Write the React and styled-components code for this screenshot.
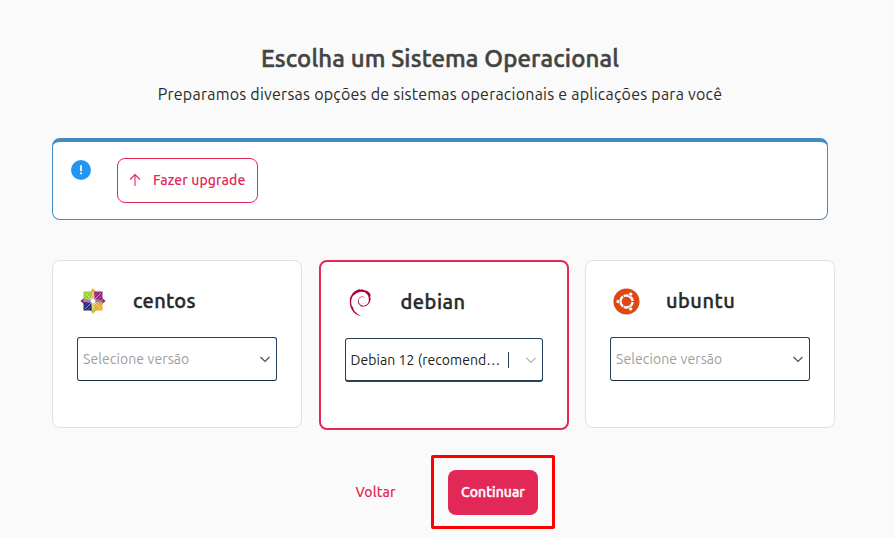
import React from "react";
import styled, { createGlobalStyle } from "styled-components";
import { SiDebian } from "react-icons/si";
import { FaUbuntu } from "react-icons/fa";

const Global = createGlobalStyle`
  * { box-sizing: border-box; }
  body { margin: 0; background: #fafafa; font-family: Ubuntu, "Noto Sans", sans-serif; }
  button { font-family: inherit; cursor: pointer; }
`;

const Page = styled.main`
  width: 895px;
  height: 538px;
  padding: 42px 0 0 52px;
  overflow: hidden;
`;
const Header = styled.header`
  width: 776px;
  text-align: center;
  height: 96px;
  white-space: nowrap;
`;
const Title = styled.h1`
  margin: 0;
  font-size: 24px;
  line-height: 34px;
  font-weight: 500;
  letter-spacing: 0.12px;
  -webkit-text-stroke: 0.5px #434343;
  color: #434343;
`;
const Subtitle = styled.p`
  margin: 6px 0 0;
  font-size: 16px;
  line-height: 24px;
  letter-spacing: 0.235px;
  color: #2b2b2b;
`;
const Notice = styled.section`
  display: flex;
  align-items: flex-start;
  width: 776px;
  height: 82px;
  padding: 16px 18px;
  border: 1px solid #428bc1;
  border-top-width: 4px;
  border-radius: 8px;
  background: #fff;
`;
const InfoDot = styled.svg`
  width: 20px;
  height: 20px;
  margin: 2px 26px 0 0;
`;
const UpgradeButton = styled.button`
  display: flex;
  align-items: center;
  gap: 12px;
  width: 141px;
  height: 45px;
  padding: 0 0 1px 11px;
  border: 1px solid #e22856;
  border-radius: 8px;
  background: #fff;
  color: #e22856;
  font-size: 14px;
  font-weight: 500;
  white-space: nowrap;
  letter-spacing: 0.1px;
`;
const Cards = styled.section`
  display: grid;
  grid-template-columns: repeat(3, 250px);
  column-gap: 16.5px;
  align-items: start;
  margin-top: 40px;
`;
const Card = styled.article`
  height: ${(p) => (p.$active ? 170 : 168)}px;
  padding: 24px;
  border: ${(p) => (p.$active ? "2px solid #e22856" : "1px solid #e0e0e0")};
  border-radius: 8px;
  background: #fff;
`;
const CardHead = styled.div`
  display: flex;
  align-items: center;
  height: 32px;
  margin-bottom: 20px;
`;
const Logo = styled.div`
  display: flex;
  align-items: center;
  justify-content: center;
  width: 32px;
  height: 32px;
  margin-right: 24px;
  svg { display: block; flex: none; }
`;
const Name = styled.h2`
  margin: 0;
  font-size: 20px;
  line-height: 30px;
  font-weight: 500;
  letter-spacing: ${(p) => p.$spacing};
  -webkit-text-stroke: 0.4px #292929;
  color: #292929;
`;
const Select = styled.div`
  display: flex;
  align-items: center;
  height: 44px;
  padding: 0 5px 0 5px;
  border: 1px solid #24405a;
  border-bottom: ${(p) => (p.$focus ? "2px solid #24405a" : "1px solid #1d2b3a")};
  border-radius: 3px;
  color: ${(p) => (p.$focus ? "#212121" : "#a0a0a0")};
  font-size: 14px;
  white-space: nowrap;
`;
const Value = styled.span`
  letter-spacing: ${(p) => p.$spacing};
`;
const Caret = styled.span`
  width: 1px;
  height: 16px;
  margin-left: 8px;
  background: #24405a;
`;
const Chevron = styled.svg`
  width: 12px;
  height: 12px;
  margin-left: auto;
  fill: none;
  stroke: ${(p) => (p.$muted ? "#b3b3b3" : "#505050")};
  stroke-width: 1.2;
`;
const Actions = styled.footer`
  display: flex;
  align-items: center;
  margin: 25px 0 0 303px;
`;
const BackButton = styled.button`
  width: 41px;
  padding: 0;
  border: 0;
  background: none;
  color: #e22856;
  font-size: 14px;
  font-weight: 500;
  letter-spacing: 0.1px;
  margin-right: 35px;
`;
const Highlight = styled.div`
  display: flex;
  align-items: center;
  justify-content: center;
  width: 124px;
  height: 74px;
  border: 3px solid #ff0000;
  border-radius: 2px;
`;
const ContinueButton = styled.button`
  width: 90px;
  height: 45px;
  padding: 0;
  border: 0;
  border-radius: 8px;
  background: #e22856;
  color: #fff;
  font-size: 14px;
  font-weight: 500;
  letter-spacing: 0.05px;
  -webkit-text-stroke: 0.4px #fff;
`;

function CentosLogo() {
  return (
    <svg width="26" height="26" viewBox="0 0 26 26">
      <path d="M13 .3 16 4h-6z" fill="#efa724" />
      <path d="m25.700 13-3.700 3v-6z" fill="#932279" />
      <path d="M13 25.700 10 22h6z" fill="#9ccd2a" />
      <path d="M.3 13 4 10v6z" fill="#932279" />
      <path d="M3.500 3.500H12V12H3.500z" fill="#9ccd2a" />
      <path d="M14 3.500h8.500V12H14z" fill="#932279" />
      <path d="M3.500 14H12v8.500H3.500z" fill="#262577" />
      <path d="M14 14h8.500v8.500H14z" fill="#efa724" />
      <path d="M11.700 3.500h2.600V12h-2.600z" fill="#efc276" />
      <path d="M14 11.700h8.500v2.600H14z" fill="#8681b4" />
      <path d="M11.700 14h2.600v8.500h-2.600z" fill="#bddf79" />
      <path d="M3.500 11.700H12v2.600H3.500z" fill="#b978aa" />
      <path d="m5 5 16 16M21 5 5 21" fill="none" stroke="#fff" strokeOpacity=".8" strokeWidth=".7" />
      <path d="m7 3.500 4.500 4.500v3.500H8L3.500 7M19 3.500 14.500 8v3.500H18L22.500 7M7 22.500l4.500-4.500v-3.500H8L3.500 19M19 22.500 14.500 18v-3.500H18l4.500 4.500" fill="none" stroke="#fff" strokeOpacity=".4" strokeWidth=".6" />
      <path d="m13 10 1.200 1.800L16 13l-1.800 1.200L13 16l-1.200-1.800L10 13l1.800-1.200z" fill="#fff" />
    </svg>
  );
}

function DownArrow({ muted }) {
  return (
    <Chevron viewBox="0 0 12 12" $muted={muted}>
      <path d="m1.500 4 4.500 4.500L10.500 4" />
    </Chevron>
  );
}

export default function App() {
  return (
    <>
      <Global />
      <Page>
        <Header>
          <Title>Escolha um Sistema Operacional</Title>
          <Subtitle>Preparamos diversas opções de sistemas operacionais e aplicações para você</Subtitle>
        </Header>
        <Notice>
          <InfoDot viewBox="0 0 20 20">
            <circle cx="10" cy="10" r="10" fill="#2196f3" />
            <path d="M10 5.200v6M10 12.500v1.800" stroke="#fff" strokeWidth="1.700" />
          </InfoDot>
          <UpgradeButton>
            <svg width="12" height="14" viewBox="0 0 12 14" fill="none" stroke="#e22856" strokeWidth="1.1">
              <path d="M6 13V1.500M1 6.500l5-5 5 5" />
            </svg>
            Fazer upgrade
          </UpgradeButton>
        </Notice>
        <Cards>
          <Card>
            <CardHead>
              <Logo><CentosLogo /></Logo>
              <Name $spacing="0.3px">centos</Name>
            </CardHead>
            <Select><Value $spacing="0.1px">Selecione versão</Value><DownArrow /></Select>
          </Card>
          <Card $active>
            <CardHead>
              <Logo><SiDebian size={27} color="#a80030" /></Logo>
              <Name $spacing="0.5px">debian</Name>
            </CardHead>
            <Select $focus><Value $spacing="0.06px">Debian 12 (recomend…</Value><Caret /><DownArrow muted /></Select>
          </Card>
          <Card>
            <CardHead>
              <Logo><FaUbuntu size={27} color="#dd4814" /></Logo>
              <Name $spacing="0.5px">ubuntu</Name>
            </CardHead>
            <Select><Value $spacing="0.1px">Selecione versão</Value><DownArrow /></Select>
          </Card>
        </Cards>
        <Actions>
          <BackButton>Voltar</BackButton>
          <Highlight><ContinueButton>Continuar</ContinueButton></Highlight>
        </Actions>
      </Page>
    </>
  );
}
